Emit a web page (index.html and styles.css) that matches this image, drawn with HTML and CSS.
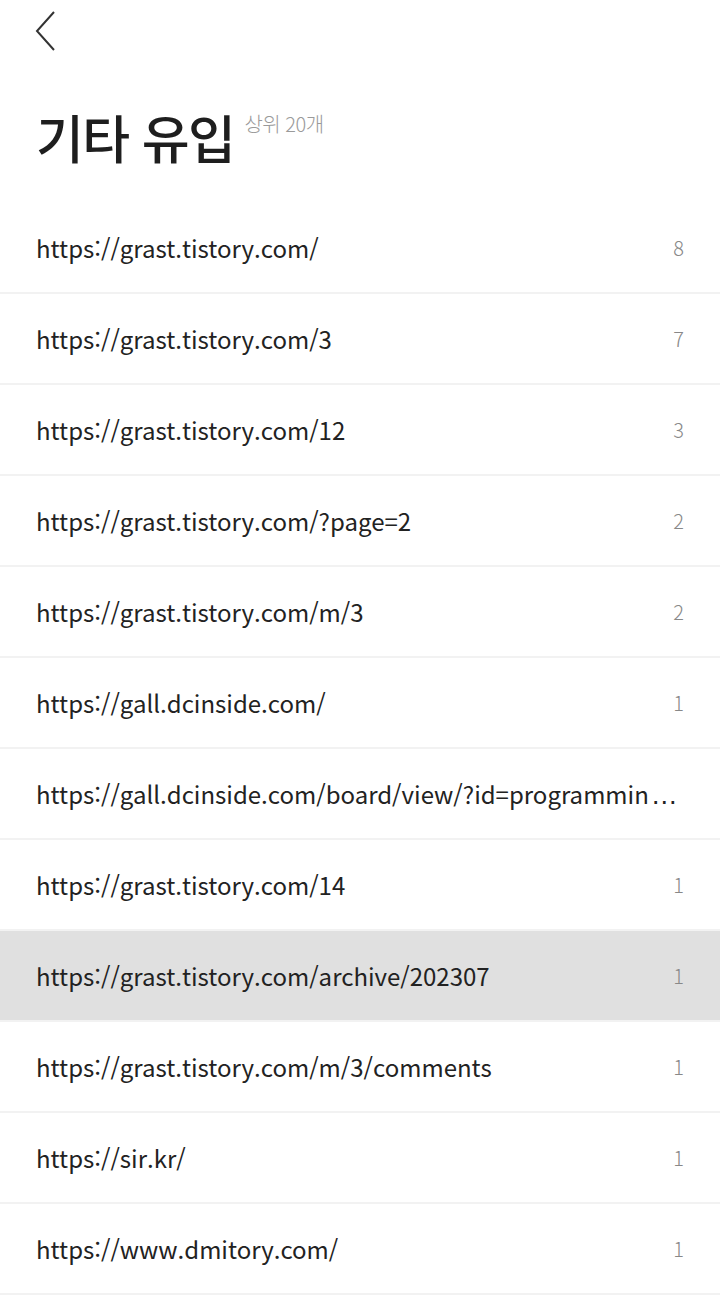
FILE: index.html
```html
<!DOCTYPE html>
<html lang="ko">

<head>
    <meta charset="UTF-8">
    <meta name="viewport" content="width=device-width, initial-scale=1.0">
    <title>기타 유입</title>
    <link rel="stylesheet" href="styles.css">
</head>

<body>
    <div class="barra">
        <a class="atras" href="#">
            <svg width="24" height="42" viewBox="0 0 24 42">
                <polyline points="19,1 2,20 19,39" fill="none" stroke="#333" stroke-width="2" />
            </svg>
        </a>
    </div>

    <div class="cabecera">
        <h1>기타 유입</h1>
        <span class="sub">상위 20개</span>
    </div>

    <ul class="lista">
        <li><span class="url">https://grast.tistory.com/</span><span class="num">8</span></li>
        <li><span class="url">https://grast.tistory.com/3</span><span class="num">7</span></li>
        <li><span class="url">https://grast.tistory.com/12</span><span class="num">3</span></li>
        <li><span class="url">https://grast.tistory.com/?page=2</span><span class="num">2</span></li>
        <li><span class="url">https://grast.tistory.com/m/3</span><span class="num">2</span></li>
        <li><span class="url">https://gall.dcinside.com/</span><span class="num">1</span></li>
        <li><span class="url">https://gall.dcinside.com/board/view/?id=programmin<span class="puntos">…</span></span></li>
        <li><span class="url">https://grast.tistory.com/14</span><span class="num">1</span></li>
        <li class="activo"><span class="url">https://grast.tistory.com/archive/202307</span><span class="num">1</span></li>
        <li><span class="url">https://grast.tistory.com/m/3/comments</span><span class="num">1</span></li>
        <li><span class="url">https://sir.kr/</span><span class="num">1</span></li>
        <li><span class="url">https://www.dmitory.com/</span><span class="num">1</span></li>
    </ul>
</body>

</html>
```

FILE: styles.css
```css
body {
    margin: 0;
    padding: 0;
    background-color: #fff;
    font-family: "Noto Sans CJK KR", "Noto Sans", sans-serif;
    color: #222;
}

.barra {
    height: 62px;
    padding-left: 35px;
    padding-top: 11px;
    box-sizing: border-box;
}

.atras {
    display: block;
    width: 24px;
    height: 42px;
}

.cabecera {
    height: 141px;
    padding-left: 36px;
    display: flex;
    align-items: flex-start;
    box-sizing: border-box;
    padding-top: 40px;
}

h1 {
    margin: 0;
    font-size: 52px;
    font-weight: 500;
    line-height: 70px;
    letter-spacing: -1.5px;
    color: #1e1e1e;
}

.sub {
    margin-left: 10px;
    margin-top: 7px;
    font-size: 20px;
    font-weight: 300;
    color: #9a9a9a;
    letter-spacing: -0.5px;
}

.lista {
    list-style: none;
    margin: 0;
    padding: 0;
}

.lista li {
    display: flex;
    align-items: center;
    height: 89px;
    padding: 0 36px;
    border-bottom: 2px solid #f2f2f2;
}

.lista li.activo {
    background-color: #e0e0e0;
}

.url {
    flex: 1;
    min-width: 0;
    white-space: nowrap;
    overflow: hidden;
    font-size: 24px;
    color: #222;
}

.puntos {
    margin-left: 2px;
    font-family: "Liberation Sans", sans-serif;
    font-size: 27px;
}

.num {
    margin-left: 20px;
    font-size: 20px;
    font-weight: 300;
    color: #888;
}
```
